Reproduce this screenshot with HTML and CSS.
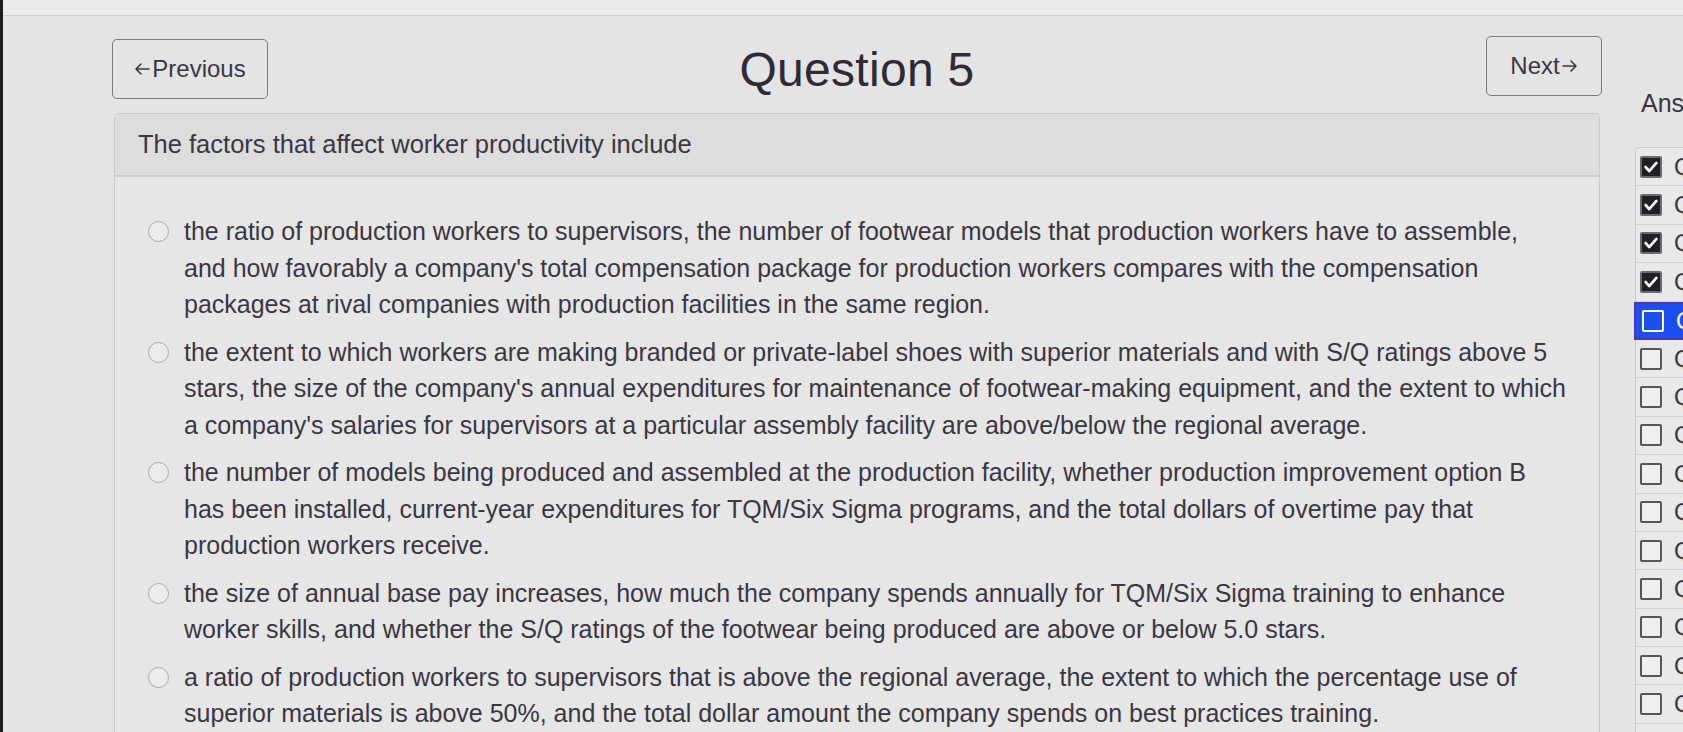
FILE: index.html
```html
<!DOCTYPE html>
<html lang="en">
<head>
  <meta charset="UTF-8" />
  <meta name="viewport" content="width=device-width, initial-scale=1.0"/>
  <title>Question 5</title>
  <link rel="stylesheet" href="styles.css">
</head>
<body>
  <div class="topbar"></div>

  <div class="page">
    <div class="main">
      <div class="quiz-header">
        <button class="nav-btn prev"><svg class="arrow" viewBox="0 0 16 14"><path d="M15 7H2M7 2L2 7l5 5"/></svg>Previous</button>
        <h1 class="title">Question 5</h1>
        <button class="nav-btn next">Next<svg class="arrow" viewBox="0 0 16 14"><path d="M1 7h13M9 2l5 5-5 5"/></svg></button>
      </div>

      <div class="card">
        <div class="card-head">The factors that affect worker productivity include</div>
        <div class="card-body">
          <label class="option">
            <span class="radio"></span>
            <span class="option-text">the ratio of production workers to supervisors, the number of footwear models that production workers have to assemble, and how favorably a company's total compensation package for production workers compares with the compensation packages at rival companies with production facilities in the same region.</span>
          </label>
          <label class="option">
            <span class="radio"></span>
            <span class="option-text">the extent to which workers are making branded or private-label shoes with superior materials and with S/Q ratings above 5 stars, the size of the company's annual expenditures for maintenance of footwear-making equipment, and the extent to which a company's salaries for supervisors at a particular assembly facility are above/below the regional average.</span>
          </label>
          <label class="option">
            <span class="radio"></span>
            <span class="option-text">the number of models being produced and assembled at the production facility, whether production improvement option B has been installed, current-year expenditures for TQM/Six Sigma programs, and the total dollars of overtime pay that production workers receive.</span>
          </label>
          <label class="option">
            <span class="radio"></span>
            <span class="option-text">the size of annual base pay increases, how much the company spends annually for TQM/Six Sigma training to enhance worker skills, and whether the S/Q ratings of the footwear being produced are above or below 5.0 stars.</span>
          </label>
          <label class="option">
            <span class="radio"></span>
            <span class="option-text">a ratio of production workers to supervisors that is above the regional average, the extent to which the percentage use of superior materials is above 50%, and the total dollar amount the company spends on best practices training.</span>
          </label>
        </div>
      </div>
    </div>

    <div class="answers">
      <div class="answers-title">Answers</div>
      <ul class="answer-list">
        <li class="answer done"><span class="box"><svg viewBox="0 0 20 20"><polyline points="4,10 8,14.5 16,5.5"/></svg></span>Question 1</li>
        <li class="answer done"><span class="box"><svg viewBox="0 0 20 20"><polyline points="4,10 8,14.5 16,5.5"/></svg></span>Question 2</li>
        <li class="answer done"><span class="box"><svg viewBox="0 0 20 20"><polyline points="4,10 8,14.5 16,5.5"/></svg></span>Question 3</li>
        <li class="answer done"><span class="box"><svg viewBox="0 0 20 20"><polyline points="4,10 8,14.5 16,5.5"/></svg></span>Question 4</li>
        <li class="answer current"><span class="box"></span>Question 5</li>
        <li class="answer"><span class="box"></span>Question 6</li>
        <li class="answer"><span class="box"></span>Question 7</li>
        <li class="answer"><span class="box"></span>Question 8</li>
        <li class="answer"><span class="box"></span>Question 9</li>
        <li class="answer"><span class="box"></span>Question 10</li>
        <li class="answer"><span class="box"></span>Question 11</li>
        <li class="answer"><span class="box"></span>Question 12</li>
        <li class="answer"><span class="box"></span>Question 13</li>
        <li class="answer"><span class="box"></span>Question 14</li>
        <li class="answer"><span class="box"></span>Question 15</li>
        <li class="answer"><span class="box"></span>Question 16</li>
      </ul>
    </div>
  </div>
</body>
</html>
```

FILE: styles.css
```css
* {
  box-sizing: border-box;
  margin: 0;
  padding: 0;
}

html, body {
  height: 732px;
  overflow: hidden;
}

body {
  font-family: "Liberation Sans", Arial, sans-serif;
  background-color: #e4e4e4;
  color: #3a3642;
  border-left: 3px solid #1c1c1c;
}

.topbar {
  height: 16px;
  background-color: #ebebeb;
  border-bottom: 1px solid #cdcdcd;
}

.page {
  display: flex;
  padding-left: 109px;
}

.main {
  width: 1490px;
  flex-shrink: 0;
}

.quiz-header {
  display: grid;
  grid-template-columns: 1fr auto 1fr;
  align-items: center;
  margin-top: 22px;
  height: 62px;
}

.nav-btn {
  font-family: inherit;
  font-size: 24px;
  color: #3a3642;
  background: transparent;
  border: 1.5px solid #7a7a80;
  border-radius: 5px;
  height: 60px;
  cursor: pointer;
  display: flex;
  align-items: center;
  justify-content: center;
}

.arrow {
  width: 16px;
  height: 14px;
  fill: none;
  stroke: #3a3642;
  stroke-width: 1.6;
  stroke-linecap: round;
  stroke-linejoin: round;
}

.prev .arrow {
  margin-right: 2px;
}

.next .arrow {
  margin-left: 2px;
}

.prev {
  justify-self: start;
  width: 156px;
}

.next {
  justify-self: end;
  width: 116px;
  margin-top: -6px;
}

.title {
  font-size: 48px;
  font-weight: normal;
  color: #2e2a36;
  letter-spacing: 0.3px;
}

.card {
  margin-top: 13px;
  margin-left: 2px;
  width: 1486px;
  border: 1px solid #c9c9c9;
  border-bottom: none;
  border-radius: 5px 5px 0 0;
  background-color: #e6e6e6;
}

.card-head {
  height: 63px;
  display: flex;
  align-items: center;
  padding-left: 23px;
  font-size: 25.5px;
  background-color: #dddddd;
  border-bottom: 2px solid #cdcdcd;
  border-radius: 5px 5px 0 0;
}

/* right padding keeps the answer lines wrapping where the original does */
.card-body {
  padding: 36px 32.65px 0 33px;
}

.option {
  display: flex;
  align-items: flex-start;
  gap: 15px;
  margin-bottom: 11px;
  font-size: 25px;
  line-height: 36.5px;
  cursor: pointer;
}

.option-text {
  flex: 1;
}

.radio {
  flex-shrink: 0;
  width: 21px;
  height: 21px;
  margin-top: 8px;
  border: 1.5px solid #a9a9ae;
  border-radius: 50%;
  background-color: #ececec;
}

.answers {
  padding-left: 39px;
  padding-top: 73px;
  white-space: nowrap;
}

.answers-title {
  font-size: 25px;
  line-height: 29px;
  color: #3a3642;
}

.answer-list {
  list-style: none;
  margin-top: 29px;
  margin-left: -6px;
  border-left: 1px solid #c9c9c9;
  border-top: 1px solid #c9c9c9;
  border-radius: 5px 0 0 0;
  background-color: #e9e9e9;
  width: 200px;
}

.answer {
  display: flex;
  align-items: center;
  gap: 12px;
  height: 38.4px;
  padding-left: 4px;
  font-size: 24px;
  color: #3a3642;
  border-bottom: 1px solid #d2d2d2;
}

.box {
  width: 22px;
  height: 22px;
  flex-shrink: 0;
  border: 2px solid #55555c;
  border-radius: 2px;
  background-color: #efefef;
  display: flex;
  align-items: center;
  justify-content: center;
}

.done .box {
  background-color: #202024;
  border-color: #6a6a70;
}

.box svg {
  width: 18px;
  height: 18px;
  fill: none;
  stroke: #ffffff;
  stroke-width: 3;
  stroke-linecap: round;
  stroke-linejoin: round;
}

.current {
  background-color: #1d4ef0;
  color: #ffffff;
  border: 2px solid #4b3aa8;
  border-right: none;
  margin-left: -2px;
  padding-left: 6px;
}

.current .box {
  background-color: #1d4ef0;
  border-color: #ffffff;
}
```
